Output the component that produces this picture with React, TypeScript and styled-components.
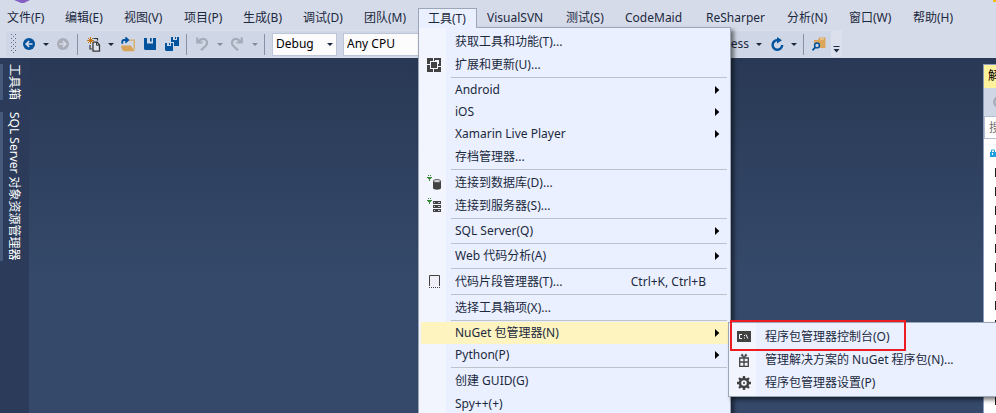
import React from 'react';
import styled, { createGlobalStyle, css } from 'styled-components';

const Global = createGlobalStyle`
  * { box-sizing: border-box; }
  html, body { margin: 0; overflow: hidden; background: #35496a; }
  body, button, input, select {
    font-family: "Noto Sans", "Noto Sans CJK SC", sans-serif;
    font-size: 12px;
    line-height: 18px;
    color: #1b293e;
  }
  button { border: 0; padding: 0; background: none; text-align: left; }
  svg { display: block; flex: none; }
`;

const Window = styled.div`
  display: flex;
  flex-direction: column;
  height: 100vh;
  overflow: hidden;
`;

const TitleBar = styled.div`
  display: flex;
  justify-content: space-between;
  height: 8px;
  padding-left: 14px;
  background: #d6dbe9;
`;

const MenuBar = styled.nav`
  display: flex;
  height: 22px;
  background: #d6dbe9;
`;

const MenuSlot = styled.div<{ $width: number }>`
  position: relative;
  flex: 0 0 ${(p) => p.$width}px;
  &:first-child > button { padding-left: 7px; }
`;

const MenuButton = styled.button<{ $open?: boolean }>`
  height: 20px;
  width: 100%;
  padding: 0 0 0 10px;
  white-space: nowrap;
  ${(p) =>
    p.$open &&
    css`
      position: relative;
      z-index: 3;
      padding-left: 9px;
      border: 1px solid #9ba7b7;
      border-bottom: 0;
      background: #eaf0ff;
      line-height: 17px;
    `}
`;

const Popup = styled.div`
  position: absolute;
  z-index: 2;
  border: 1px solid #9ba7b7;
  padding: 2px;
  background: linear-gradient(to right, #f2f4fe 27px, #eaf0ff 27px);
  box-shadow: 3px 3px 4px rgba(0, 0, 0, 0.5);
`;

const ToolsPopup = styled(Popup)`
  top: 19px;
  left: 0;
  width: 313px;
`;

const SubPopup = styled(Popup)`
  top: 0;
  left: 307px;
  width: 290px;
`;

const ItemSlot = styled.div`
  position: relative;
`;

const ItemButton = styled.button<{ $tall?: boolean; $active?: boolean }>`
  display: flex;
  align-items: center;
  width: 100%;
  height: ${(p) => (p.$tall ? 23 : 22)}px;
  padding-right: 8px;
  background: ${(p) => (p.$active ? '#fdf4bf' : 'transparent')};
  white-space: nowrap;
`;

const IconCell = styled.span`
  display: flex;
  justify-content: center;
  flex: 0 0 26px;
  margin-right: 8px;
`;

const ItemLabel = styled.span`
  flex: 1;
`;

const Shortcut = styled.span`
  margin-right: 14px;
`;

const Rule = styled.hr`
  height: 1px;
  margin: 1px 1px 1px 30px;
  border: 0;
  background: #bec3cb;
`;

const Callout = styled.div`
  position: absolute;
  z-index: 4;
  top: -3px;
  left: 1px;
  width: 176px;
  height: 31px;
  border: 2px solid #ed1c24;
  pointer-events: none;
`;

const ToolRow = styled.div`
  display: flex;
  height: 28px;
  padding-left: 6px;
  background: #d6dbe9;
`;

const ToolBar = styled.div`
  display: flex;
  align-items: center;
  flex: 0 0 825px;
  height: 27px;
  background: #cfd6e5;
  border-top: 1px solid #dce0ec;
`;

const ToolButton = styled.button<{ $width: number }>`
  display: flex;
  align-items: center;
  justify-content: center;
  flex: 0 0 ${(p) => p.$width}px;
  height: 24px;
`;

const GripHandle = styled.div`
  flex: none;
  margin: 0 7px 0 5px;
`;

const Divider = styled.div<{ $before?: number; $after?: number }>`
  flex: 0 0 1px;
  height: 21px;
  margin-left: ${(p) => p.$before ?? 0}px;
  margin-right: ${(p) => p.$after ?? 0}px;
  background: #8592a8;
`;

const Combo = styled.label<{ $width: number }>`
  display: flex;
  align-items: center;
  flex: 0 0 ${(p) => p.$width}px;
  height: 23px;
  margin-left: 6px;
  padding-right: 3px;
  border: 1px solid #bdc5d8;
  background: #fcfcfc;
  select {
    flex: 1;
    min-width: 0;
    height: 20px;
    padding: 0 0 0 3px;
    border: 0;
    appearance: none;
    background: transparent;
    color: #000;
  }
  svg { pointer-events: none; }
`;

const StartButton = styled.button`
  flex: 1;
  height: 24px;
  text-align: right;
`;

const Overflow = styled.button`
  display: flex;
  align-items: flex-end;
  justify-content: center;
  width: 11px;
  height: 27px;
  padding-bottom: 4px;
  background: #dce0ec;
`;

const Workspace = styled.div`
  display: flex;
  flex: 1;
  min-height: 0;
  background: linear-gradient(#293955, #35496a 220px);
`;

const SideStrip = styled.div`
  display: flex;
  flex-direction: column;
  gap: 12px;
  flex: 0 0 29px;
  padding-top: 6px;
  background: #2b3b59;
`;

const SideTab = styled.button`
  align-self: flex-start;
  border-left: 3px solid #465a7d;
  padding-left: 2px;
  writing-mode: vertical-rl;
  text-orientation: sideways;
  white-space: nowrap;
  color: #fff;
`;

const Canvas = styled.main`
  flex: 1;
`;

const Explorer = styled.aside`
  display: flex;
  flex-direction: column;
  flex: 0 0 13px;
  margin-top: 6px;
  overflow: hidden;
  border-left: 1px solid #8e9bbc;
  border-top: 1px solid #8e9bbc;
  background: #fff;
  white-space: nowrap;
`;

const ExplorerTitle = styled.div`
  flex: 0 0 23px;
  padding: 2px 0 0 4px;
  background: #fff29d;
  color: #000;
`;

const ExplorerTools = styled.div`
  display: flex;
  align-items: center;
  flex: 0 0 28px;
  padding-left: 9px;
  background: #cfd6e5;
`;

const SearchBox = styled.input`
  flex: 0 0 23px;
  width: 240px;
  padding: 0 0 0 4px;
  border: 1px solid #b4bdd0;
  background: #fff;
  &::placeholder { color: #6d6d6d; opacity: 1; }
`;

const Tree = styled.div`
  display: flex;
  flex-direction: column;
  padding-top: 4px;
`;

const TreeRow = styled.div<{ $indent: number }>`
  display: flex;
  align-items: center;
  flex: 0 0 19px;
  padding-left: ${(p) => p.$indent}px;
`;

const Grip = () => (
  <svg width="5" height="20" viewBox="0 0 5 20" shapeRendering="crispEdges">
    {[0, 4, 8, 12, 16].map((y) => (
      <path key={y} d={`M0 ${y}h1v1H0zM4 ${y}h1v1H4zM2 ${y + 2}h1v1H2z`} fill="#5f6c87" />
    ))}
  </svg>
);

const Caret = ({ color = '#1b293e' }: { color?: string }) => (
  <svg width="6" height="3" viewBox="0 0 6 3"><path d="M0 0h6L3 3z" fill={color} /></svg>
);

const RightArrow = () => (
  <svg width="5" height="8" viewBox="0 0 5 8"><path d="M0 0v8L4.3 4z" fill="#000" /></svg>
);

const Nav = ({ color, flip }: { color: string; flip?: boolean }) => (
  <svg width="12" height="12" viewBox="0 0 12 12">
    <circle cx="6" cy="6" r="6" fill={color} />
    <path
      d={flip ? 'M2.5 6h6M5.8 3l3 3-3 3' : 'M9.5 6h-6M6.2 3l-3 3 3 3'}
      fill="none" stroke="#d6dbe9" strokeWidth="1.7"
    />
  </svg>
);

const NewProject = () => (
  <svg width="14" height="15" viewBox="0 0 14 15">
    <path d="M6.5 1.5h4v2M3 8v4h2" fill="none" stroke="#383838" strokeWidth="1.2" />
    <path d="M6 5.2h4.2L12.5 8v6.2H6z" fill="#dde2ee" stroke="#383838" strokeWidth="1.3" />
    <path d="M9.5 5v3.2h3" fill="none" stroke="#383838" />
    <path d="M3.5 0v7M0 3.5h7M1 1l5 5M6 1L1 6" stroke="#c27613" strokeWidth="1" />
  </svg>
);

const OpenFolder = () => (
  <svg width="14" height="15" viewBox="0 0 14 15">
    <path d="M8 3.2h5.3v9.5" fill="none" stroke="#dbab65" strokeWidth="1.3" />
    <path d="M0.3 8.5h9.5l3.8 5.7H2.3L0.3 11z" fill="#d9a458" />
    <path d="M1.3 6.8V4.6Q1.3 3 3 3H6M4.4 0.4L7.2 3 4.4 5.6" fill="none" stroke="#00539c" strokeWidth="1.8" />
  </svg>
);

const Save = () => (
  <svg width="12" height="12" viewBox="0 0 12 12">
    <path fillRule="evenodd" d="M0 0h12v12H1L0 11zM3 0v5.5h6V0H7.7v3.5H6V0z" fill="#00539c" />
  </svg>
);

const SaveAll = () => (
  <svg width="14" height="14" viewBox="0 0 14 14">
    <path fillRule="evenodd" d="M6 0h8v9H9V5H6zM8 0v3h4V0h-1v2h-1V0z" fill="#00539c" />
    <path fillRule="evenodd" d="M0 6h8v8H1l-1-1zM2 6v3h4V6H5v2H4V6z" fill="#00539c" />
  </svg>
);

const Undo = ({ flip }: { flip?: boolean }) => (
  <svg width="12" height="14" viewBox="0 0 12 14">
    <g transform={flip ? 'matrix(-1 0 0 1 12 0)' : undefined} fill="none" stroke="#a5abb8" strokeWidth="2.2">
      <path d="M1.3 0.5v5H6.5" />
      <path d="M2 5.2C4 2.2 7 1.2 9.2 2.4c2.4 1.5 2.3 4.4 0.6 6.3L5 13.2" />
    </g>
  </svg>
);

const Refresh = () => (
  <svg width="13" height="14" viewBox="0 0 13 14">
    <path d="M7 3.2A4.8 4.8 0 1 0 11.2 8" fill="none" stroke="#00539c" strokeWidth="2.4" />
    <path d="M6 0v6.6L11 3.3z" fill="#00539c" />
  </svg>
);

const FindFolder = () => (
  <svg width="14" height="14" viewBox="0 0 14 14">
    <path d="M2 3h4l1-2.5h6.5V11H7L2 8z" fill="#dba65b" />
    <path d="M8 2h4" stroke="#f0dcb9" />
    <circle cx="5" cy="8.4" r="2.4" fill="#cfd6e5" stroke="#00539c" strokeWidth="1.5" />
    <path d="M3.4 10.2L0.5 13.3" stroke="#00539c" strokeWidth="1.8" />
  </svg>
);

const Extensions = () => (
  <svg width="14" height="14" viewBox="0 0 14 14" shapeRendering="crispEdges">
    <path d="M0 0h14v14H0z" fill="#424242" />
    <path d="M3.5 3.5h7v7h-7z" fill="none" stroke="#f2f4fe" />
    <path d="M6 0h1v3H6zM0 6h3v1H0zM6 11h1v3H6zM11 8h3v1h-3zM8 2h4v4h-2V4H8z" fill="#f2f4fe" />
  </svg>
);

const Plug = () => (
  <path d="M1.5 0v1M3.5 0v1M0 2.5h5M1 3.5h3M2.5 4v2" fill="none" stroke="#388a34" strokeWidth="1" />
);

const Database = () => (
  <svg width="14" height="15" viewBox="0 0 14 15">
    <Plug />
    <path d="M6 6v7c0 2.2 8 2.2 8 0V6z" fill="#424242" />
    <ellipse cx="10" cy="6" rx="3.6" ry="1.5" fill="#dcdce0" stroke="#424242" strokeWidth="0.8" />
  </svg>
);

const Server = () => (
  <svg width="14" height="15" viewBox="0 0 14 15">
    <Plug />
    <path d="M6 3h8v3H6zM6 7h8v3H6zM6 11h8v3H6z" fill="#424242" />
    <path d="M7 4.5h1M11 4.5h2M7 8.5h1M11 8.5h2M7 12.5h1M11 12.5h2" stroke="#c4c5cc" />
  </svg>
);

const Snippet = () => (
  <svg width="12" height="13" viewBox="0 0 12 13">
    <path d="M1.5 11V0.5h10V11" fill="#efeef9" stroke="#424242" />
    <path d="M1 12.5h11" stroke="#424242" strokeDasharray="1 1" />
  </svg>
);

const ConsoleIcon = () => (
  <svg width="14" height="11" viewBox="0 0 14 11">
    <path d="M0 0h14v11H0z" fill="#424242" />
    <path d="M5 3.5H2.5v4H5M7.5 4v1M7.5 6.5v1M9 3.5l1.8 4" fill="none" stroke="#fff" />
  </svg>
);

const Gift = () => (
  <svg width="10" height="14" viewBox="0 0 10 14">
    <path d="M0.7 5h8.6v4H0.7zM0.7 9h8.6v4.3H0.7zM5 4v9" fill="none" stroke="#424242" strokeWidth="1.3" />
    <path d="M5 4L2 2.8l1.2-2zM5 4l3-1.2-1.2-2z" fill="#424242" stroke="#424242" strokeWidth="0.6" />
  </svg>
);

const Gear = () => (
  <svg width="14" height="14" viewBox="0 0 14 14">
    <circle cx="7" cy="7" r="4.1" fill="none" stroke="#424242" strokeWidth="2.6" />
    <path d="M7 0v2.5M7 11.5V14M0 7h2.5M11.5 7H14M2 2l2 2M10 10l2 2M12 2l-2 2M4 10l-2 2" stroke="#424242" strokeWidth="2.3" />
    <circle cx="7" cy="7" r="1" fill="#424242" />
  </svg>
);

type Entry =
  | 'rule'
  | { label: string; tall?: boolean; icon?: React.ReactNode; arrow?: boolean; keys?: string; active?: boolean };

const submenu: Entry[] = [
  { label: '程序包管理器控制台(O)', tall: true, icon: <ConsoleIcon /> },
  { label: '管理解决方案的 NuGet 程序包(N)...', tall: true, icon: <Gift /> },
  { label: '程序包管理器设置(P)', tall: true, icon: <Gear /> },
];

const tools: Entry[] = [
  { label: '获取工具和功能(T)...', tall: true },
  { label: '扩展和更新(U)...', tall: true, icon: <Extensions /> },
  'rule',
  { label: 'Android', arrow: true },
  { label: 'iOS', arrow: true },
  { label: 'Xamarin Live Player', arrow: true },
  { label: '存档管理器...', tall: true },
  'rule',
  { label: '连接到数据库(D)...', tall: true, icon: <Database /> },
  { label: '连接到服务器(S)...', tall: true, icon: <Server /> },
  'rule',
  { label: 'SQL Server(Q)', arrow: true },
  'rule',
  { label: 'Web 代码分析(A)', arrow: true },
  'rule',
  { label: '代码片段管理器(T)...', tall: true, icon: <Snippet />, keys: 'Ctrl+K, Ctrl+B' },
  'rule',
  { label: '选择工具箱项(X)...', tall: true },
  'rule',
  { label: 'NuGet 包管理器(N)', arrow: true, active: true },
  { label: 'Python(P)', arrow: true },
  'rule',
  { label: '创建 GUID(G)', tall: true },
  { label: 'Spy++(+)', tall: true },
];

const menus: [string, number][] = [
  ['文件(F)', 55], ['编辑(E)', 59], ['视图(V)', 60], ['项目(P)', 59], ['生成(B)', 60],
  ['调试(D)', 61], ['团队(M)', 64], ['工具(T)', 59], ['VisualSVN', 79], ['测试(S)', 59],
  ['CodeMaid', 81], ['ReSharper', 81], ['分析(N)', 62], ['窗口(W)', 64], ['帮助(H)', 60],
];

const Entries = ({ items }: { items: Entry[] }) => (
  <>
    {items.map((item, i) =>
      item === 'rule' ? (
        <Rule key={i} />
      ) : (
        <ItemSlot key={i}>
          <ItemButton $tall={item.tall} $active={item.active}>
            <IconCell>{item.icon}</IconCell>
            <ItemLabel>{item.label}</ItemLabel>
            {item.keys && <Shortcut>{item.keys}</Shortcut>}
            {item.arrow && <RightArrow />}
          </ItemButton>
          {item.active && (
            <SubPopup>
              <Entries items={submenu} />
              <Callout />
            </SubPopup>
          )}
        </ItemSlot>
      ),
    )}
  </>
);

export default function App() {
  return (
    <Window>
      <Global />
      <TitleBar>
        <svg width="16" height="4" viewBox="0 0 16 4"><path d="M0 0h16l-6 3H7z" fill="#865fc5" /></svg>
        <svg width="3" height="2" viewBox="0 0 3 2"><path d="M0 0h3v2H0z" fill="#f2b90c" /></svg>
      </TitleBar>
      <MenuBar>
        {menus.map(([name, width]) => (
          <MenuSlot key={name} $width={width}>
            <MenuButton $open={name === '工具(T)'}>{name}</MenuButton>
            {name === '工具(T)' && (
              <ToolsPopup><Entries items={tools} /></ToolsPopup>
            )}
          </MenuSlot>
        ))}
      </MenuBar>
      <ToolRow>
        <ToolBar>
          <GripHandle><Grip /></GripHandle>
          <ToolButton $width={12} aria-label="Back"><Nav color="#00539c" /></ToolButton>
          <ToolButton $width={22} aria-label="Back history"><Caret /></ToolButton>
          <ToolButton $width={12} aria-label="Forward"><Nav color="#a9adb8" flip /></ToolButton>
          <Divider $before={8} $after={5} />
          <ToolButton $width={22} aria-label="New project"><NewProject /></ToolButton>
          <ToolButton $width={12} aria-label="New project options"><Caret /></ToolButton>
          <ToolButton $width={22} aria-label="Open file"><OpenFolder /></ToolButton>
          <ToolButton $width={22} aria-label="Save"><Save /></ToolButton>
          <ToolButton $width={22} aria-label="Save all"><SaveAll /></ToolButton>
          <Divider $before={3} $after={5} />
          <ToolButton $width={20} aria-label="Undo"><Undo /></ToolButton>
          <ToolButton $width={16} aria-label="Undo history"><Caret color="#848b9b" /></ToolButton>
          <ToolButton $width={18} aria-label="Redo"><Undo flip /></ToolButton>
          <ToolButton $width={18} aria-label="Redo history"><Caret color="#848b9b" /></ToolButton>
          <Divider $after={1} />
          <Combo $width={65}>
            <select aria-label="Configuration"><option>Debug</option></select>
            <Caret />
          </Combo>
          <Combo $width={110}>
            <select aria-label="Platform"><option>Any CPU</option></select>
            <Caret />
          </Combo>
          <StartButton>Process</StartButton>
          <ToolButton $width={20} aria-label="Start options"><Caret /></ToolButton>
          <ToolButton $width={16} aria-label="Refresh"><Refresh /></ToolButton>
          <ToolButton $width={18} aria-label="Refresh options"><Caret /></ToolButton>
          <Divider $after={2} />
          <ToolButton $width={25} aria-label="Find in files"><FindFolder /></ToolButton>
        </ToolBar>
        <Overflow aria-label="Toolbar options">
          <svg width="7" height="7" viewBox="0 0 7 7"><path d="M0.5 0h6v1h-6zM0.5 3h6l-3 3.5z" fill="#1b293e" /></svg>
        </Overflow>
      </ToolRow>
      <Workspace>
        <SideStrip>
          <SideTab>工具箱</SideTab>
          <SideTab>SQL Server 对象资源管理器</SideTab>
        </SideStrip>
        <Canvas />
        <Explorer>
          <ExplorerTitle>解</ExplorerTitle>
          <ExplorerTools><Nav color="#a9adb8" /></ExplorerTools>
          <SearchBox aria-label="Search" placeholder="搜" />
          <Tree>
            <TreeRow $indent={6}>
              <svg width="6" height="8" viewBox="0 0 6 8">
                <path d="M1.5 3V1h3v2" fill="none" stroke="#1ba1e2" />
                <path fillRule="evenodd" d="M0 3h6v5H0zM2 4v2h1V4z" fill="#1ba1e2" />
              </svg>
            </TreeRow>
            {Array.from({ length: 14 }, (_, i) => (
              <TreeRow key={i} $indent={11}>
                <svg width="10" height="10" viewBox="0 0 10 10"><path d="M0 1l8-1v9l-8 1z" fill="#1e1e1e" /></svg>
              </TreeRow>
            ))}
          </Tree>
        </Explorer>
      </Workspace>
    </Window>
  );
}
